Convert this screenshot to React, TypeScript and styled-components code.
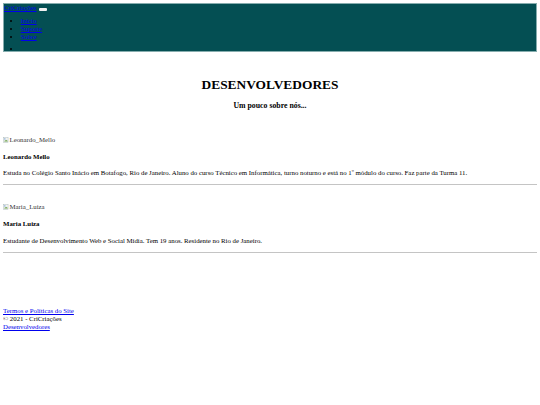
import React from "react";
import styled, { createGlobalStyle } from "styled-components";

const Global = createGlobalStyle`
  html, body { background: #ffffff; }
  body {
    margin: 3px;
    font-family: "Liberation Serif", "Times New Roman", serif;
    font-size: 6.8px;
    line-height: 8px;
    color: #000;
  }
  a { color: #0000ee; text-decoration: underline; }
`;

const Navbar = styled.nav`
  height: 47px;
  border: 1px solid #86adae;
  background: #044f53;
`;

const BrandRow = styled.div`
  display: flex;
  align-items: center;
  gap: 3px;
  height: 8px;
`;

const Brand = styled.a``;

const Toggler = styled.button`
  width: 8px;
  height: 3px;
  padding: 0;
  border: none;
  border-radius: 1px;
  background: #f0f0f0;
  margin-top: 2px;
`;

const NavList = styled.ul<{ $top: number }>`
  margin: ${(p) => p.$top}px 0 0;
  padding-left: 16.8px;
  list-style: disc;
  line-height: 7.7px;
`;

const NavItem = styled.li`
  height: 7.7px;
`;

const Hero = styled.header`
  text-align: center;
  margin-top: 25px;
`;

const Title = styled.h1`
  font-size: 13.4px;
  line-height: 15px;
  margin: 0;
  font-weight: bold;
`;

const Subtitle = styled.h3`
  font-size: 7.8px;
  line-height: 9px;
  margin: 9px 0 0;
  font-weight: bold;
`;

const Card = styled.section<{ $top: number }>`
  margin-top: ${(p) => p.$top}px;
`;

const Alt = styled.div`
  display: flex;
  align-items: center;
  height: 8px;
  color: #333;
`;

const AltIcon = styled.svg`
  width: 6px;
  height: 6px;
  margin-right: 0.5px;
`;

const Name = styled.h4`
  font-size: 6.8px;
  line-height: 8px;
  font-weight: bold;
  margin: 9px 0 0;
`;

const Text = styled.p`
  margin: 8.5px 0 0;
`;

const Rule = styled.hr`
  margin: 7px 0 0;
  border: none;
  border-top: 1px solid #c4c4c4;
  height: 0;
`;

const Footer = styled.footer`
  margin-top: 54px;
  display: flex;
  flex-direction: column;
  align-items: flex-start;
`;

const FooterLine = styled.span``;

const BrokenImage = () => (
  <AltIcon viewBox="0 0 16 16">
    <rect x="1.5" y="1.5" width="12" height="13" fill="#f4f4f4" stroke="#9aa" />
    <path d="M3 12 L6 8 L8 10 L10 7 L13 12 Z" fill="#6a9f4a" />
    <circle cx="5" cy="5" r="1.5" fill="#4a86c5" />
  </AltIcon>
);

const devs = [
  {
    alt: "Leonardo_Mello",
    name: "Leonardo Mello",
    text: "Estuda no Colégio Santo Inácio em Botafogo, Rio de Janeiro. Aluno do curso Técnico em Informática, turno noturno e está no 1º módulo do curso. Faz parte da Turma 11.",
    top: 25.5,
  },
  {
    alt: "Maria_Luiza",
    name: "Maria Luiza",
    text: "Estudante de Desenvolvimento Web e Social Mídia. Tem 19 anos. Residente no Rio de Janeiro.",
    top: 18,
  },
];

export default function App() {
  return (
    <>
      <Global />
      <Navbar>
        <BrandRow>
          <Brand href="#">CriCriações</Brand>
          <Toggler aria-label="menu" />
        </BrandRow>
        <NavList $top={5.3}>
          <NavItem><a href="#">Início</a></NavItem>
          <NavItem><a href="#">Suporte</a></NavItem>
          <NavItem><a href="#">Sobre</a></NavItem>
        </NavList>
        <NavList $top={4.6}>
          <NavItem />
        </NavList>
      </Navbar>
      <Hero>
        <Title>DESENVOLVEDORES</Title>
        <Subtitle>Um pouco sobre nós...</Subtitle>
      </Hero>
      {devs.map((d) => (
        <Card key={d.alt} $top={d.top}>
          <Alt>
            <BrokenImage />
            {d.alt}
          </Alt>
          <Name>{d.name}</Name>
          <Text>{d.text}</Text>
          <Rule />
        </Card>
      ))}
      <Footer>
        <a href="#">Termos e Políticas do Site</a>
        <FooterLine>© 2021 - CriCriações</FooterLine>
        <a href="#">Desenvolvedores</a>
      </Footer>
    </>
  );
}
